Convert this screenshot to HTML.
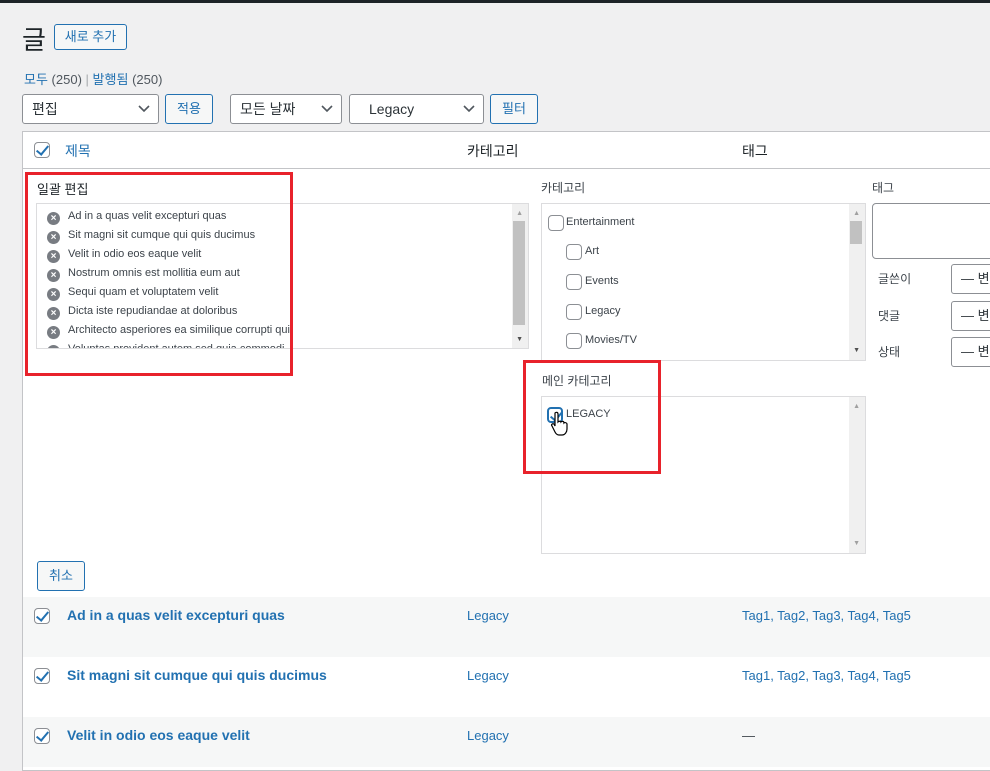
<!DOCTYPE html>
<html><head><meta charset="utf-8"><style>
*{box-sizing:border-box;margin:0;padding:0}
body{width:990px;height:763px;overflow:hidden;background:#f0f0f1;font-family:"Liberation Sans","Noto Sans CJK KR",sans-serif;font-size:13px;color:#3c434a;position:relative}
.a{position:absolute}
.btn{position:absolute;border:1px solid #2271b1;color:#2271b1;background:#f6f7f7;border-radius:3px;font-size:13px;text-align:center}
.sel{position:absolute;border:1px solid #8c8f94;background:#fff;border-radius:3px;font-size:14px;color:#2c3338;padding-left:9px}
.sel svg{position:absolute;right:8px;top:50%;margin-top:-4px}
.cb{position:absolute;width:16px;height:16px;border:1px solid #8c8f94;border-radius:4px;background:#fff}
.ck{position:absolute;width:16px;height:16px;border:1px solid #8c8f94;border-radius:4px;background:#fff}
.ck:after{content:"";position:absolute;left:4px;top:0px;width:5px;height:10px;border:solid #2271b1;border-width:0 2.5px 2.5px 0;transform:rotate(40deg)}
.lnk{color:#2271b1}
.xi{display:inline-block;width:13px;height:13px;border-radius:50%;background:#787c82;color:#fff;font-size:10px;line-height:13px;text-align:center;font-weight:bold;margin-right:8px;vertical-align:-2px}
.red{position:absolute;border:3px solid #e8222b}
.sb{position:absolute;background:#f0f0f0}
</style></head><body>
<div class="a" style="left:0;top:0;width:990px;height:3px;background:#1d2327"></div>
<div class="a" style="left:22px;top:20px;font-size:26px;color:#1d2327">글</div>
<div class="btn" style="left:54px;top:24px;width:73px;height:26px;line-height:24px">새로 추가</div>
<div class="a" style="left:24px;top:69px;font-size:13px"><span class="lnk">모두</span> <span style="color:#50575e">(250)</span> <span style="color:#a7aaad">|</span> <span class="lnk">발행됨</span> <span style="color:#50575e">(250)</span></div>
<div class="sel" style="left:22px;top:94px;width:137px;height:30px;line-height:28px">편집<svg width="12" height="8"><path d="M1 1l5 5 5-5" stroke="#50575e" stroke-width="1.6" fill="none"/></svg></div>
<div class="btn" style="left:165px;top:94px;width:48px;height:30px;line-height:28px">적용</div>
<div class="sel" style="left:230px;top:94px;width:112px;height:30px;line-height:28px">모든 날짜<svg width="12" height="8"><path d="M1 1l5 5 5-5" stroke="#50575e" stroke-width="1.6" fill="none"/></svg></div>
<div class="sel" style="left:349px;top:94px;width:135px;height:30px;line-height:28px;padding-left:19px">Legacy<svg width="12" height="8"><path d="M1 1l5 5 5-5" stroke="#50575e" stroke-width="1.6" fill="none"/></svg></div>
<div class="btn" style="left:490px;top:94px;width:48px;height:30px;line-height:28px">필터</div>

<div class="a" style="left:22px;top:131px;width:980px;height:640px;background:#fff;border:1px solid #c3c4c7"></div>
<div class="a" style="left:23px;top:168px;width:970px;height:1px;background:#c3c4c7"></div>
<div class="ck" style="left:34px;top:142px"></div>
<div class="a lnk" style="left:65px;top:141px;font-size:14px">제목</div>
<div class="a" style="left:467px;top:141px;font-size:14px;color:#1d2327">카테고리</div>
<div class="a" style="left:742px;top:141px;font-size:14px;color:#1d2327">태그</div>

<div class="a" style="left:37px;top:179px;font-size:13px;color:#1d2327">일괄 편집</div>
<div class="a" style="left:36px;top:203px;width:493px;height:146px;border:1px solid #dcdcde;overflow:hidden;font-size:11px;line-height:19px;padding:3px 0 0 10px;color:#3c434a">
<div><span class="xi">×</span>Ad in a quas velit excepturi quas</div>
<div><span class="xi">×</span>Sit magni sit cumque qui quis ducimus</div>
<div><span class="xi">×</span>Velit in odio eos eaque velit</div>
<div><span class="xi">×</span>Nostrum omnis est mollitia eum aut</div>
<div><span class="xi">×</span>Sequi quam et voluptatem velit</div>
<div><span class="xi">×</span>Dicta iste repudiandae at doloribus</div>
<div><span class="xi">×</span>Architecto asperiores ea similique corrupti qui</div>
<div><span class="xi">×</span>Voluptas provident autem sed quia commodi</div>
<div class="sb" style="right:0;top:0;width:16px;height:146px"></div>
<div class="a" style="right:3px;top:17px;width:12px;height:104px;background:#c1c1c1"></div>
<div class="a" style="right:5px;top:6px;font-size:7px;color:#a0a0a0;line-height:7px">▲</div>
<div class="a" style="right:5px;top:132px;font-size:7px;color:#505050;line-height:7px">▼</div>
</div>
<div class="red" style="left:25px;top:172px;width:268px;height:204px"></div>

<div class="a" style="left:541px;top:179px;font-size:12px">카테고리</div>
<div class="a" style="left:541px;top:203px;width:325px;height:158px;border:1px solid #dcdcde;overflow:hidden;font-size:11px">
<div class="sb" style="right:0;top:0;width:16px;height:158px"></div>
<div class="a" style="right:3px;top:17px;width:12px;height:23px;background:#c1c1c1"></div>
<div class="a" style="right:5px;top:6px;font-size:7px;color:#a0a0a0;line-height:7px">▲</div>
<div class="a" style="right:5px;top:143px;font-size:7px;color:#505050;line-height:7px">▼</div>
<div class="cb" style="left:6px;top:11px"></div><div class="a" style="left:24px;top:12px">Entertainment</div>
<div class="cb" style="left:24px;top:40px"></div><div class="a" style="left:43px;top:41px">Art</div>
<div class="cb" style="left:24px;top:70px"></div><div class="a" style="left:43px;top:71px">Events</div>
<div class="cb" style="left:24px;top:100px"></div><div class="a" style="left:43px;top:101px">Legacy</div>
<div class="cb" style="left:24px;top:129px"></div><div class="a" style="left:43px;top:130px">Movies/TV</div>
</div>
<div class="a" style="left:542px;top:372px;font-size:12px">메인 카테고리</div>
<div class="a" style="left:541px;top:396px;width:325px;height:158px;border:1px solid #dcdcde;font-size:11px">
<div class="sb" style="right:0;top:0;width:16px;height:156px"></div>
<div class="a" style="right:5px;top:6px;font-size:7px;color:#a0a0a0;line-height:7px">▲</div>
<div class="a" style="right:5px;top:143px;font-size:7px;color:#a0a0a0;line-height:7px">▼</div>
<div class="ck" style="left:5px;top:10px;border:2px solid #2271b1"></div>
<div class="a" style="left:24px;top:11px">LEGACY</div>
<svg class="a" style="left:8px;top:14px" width="20" height="26" viewBox="0 0 20 26"><path d="M5 2c1-1 3-1 3 1v8c1-1 3-1 3 0 1-1 3-1 3 1 1-1 3 0 3 1v5c0 3-2 6-5 6H9c-2 0-3-1-4-3L2 15c-1-1 0-3 2-2l1 2z" fill="#fff" stroke="#000" stroke-width="1.2"/></svg>
</div>
<div class="red" style="left:523px;top:360px;width:138px;height:114px"></div>

<div class="a" style="left:872px;top:179px;font-size:12px">태그</div>
<div class="a" style="left:872px;top:203px;width:130px;height:56px;border:1px solid #8c8f94;border-radius:4px"></div>
<div class="a" style="left:878px;top:270px;font-size:12px">글쓴이</div>
<div class="a" style="left:878px;top:307px;font-size:12px">댓글</div>
<div class="a" style="left:878px;top:343px;font-size:12px">상태</div>
<div class="sel" style="left:951px;top:264px;width:60px;height:30px;line-height:28px;font-size:13px">— 변</div>
<div class="sel" style="left:951px;top:301px;width:60px;height:30px;line-height:28px;font-size:13px">— 변</div>
<div class="sel" style="left:951px;top:337px;width:60px;height:30px;line-height:28px;font-size:13px">— 변</div>

<div class="btn" style="left:37px;top:561px;width:48px;height:30px;line-height:28px">취소</div>

<div class="a" style="left:23px;top:597px;width:970px;height:60px;background:#f6f7f7"></div>
<div class="a" style="left:23px;top:717px;width:970px;height:50px;background:#f6f7f7"></div>
<div class="ck" style="left:34px;top:608px"></div>
<div class="a lnk" style="left:67px;top:607px;font-size:14px;font-weight:bold">Ad in a quas velit excepturi quas</div>
<div class="a lnk" style="left:467px;top:608px">Legacy</div>
<div class="a lnk" style="left:742px;top:608px">Tag1, Tag2, Tag3, Tag4, Tag5</div>
<div class="ck" style="left:34px;top:668px"></div>
<div class="a lnk" style="left:67px;top:667px;font-size:14px;font-weight:bold">Sit magni sit cumque qui quis ducimus</div>
<div class="a lnk" style="left:467px;top:668px">Legacy</div>
<div class="a lnk" style="left:742px;top:668px">Tag1, Tag2, Tag3, Tag4, Tag5</div>
<div class="ck" style="left:34px;top:728px"></div>
<div class="a lnk" style="left:67px;top:727px;font-size:14px;font-weight:bold">Velit in odio eos eaque velit</div>
<div class="a lnk" style="left:467px;top:728px">Legacy</div>
<div class="a" style="left:742px;top:728px">—</div>
</body></html>
